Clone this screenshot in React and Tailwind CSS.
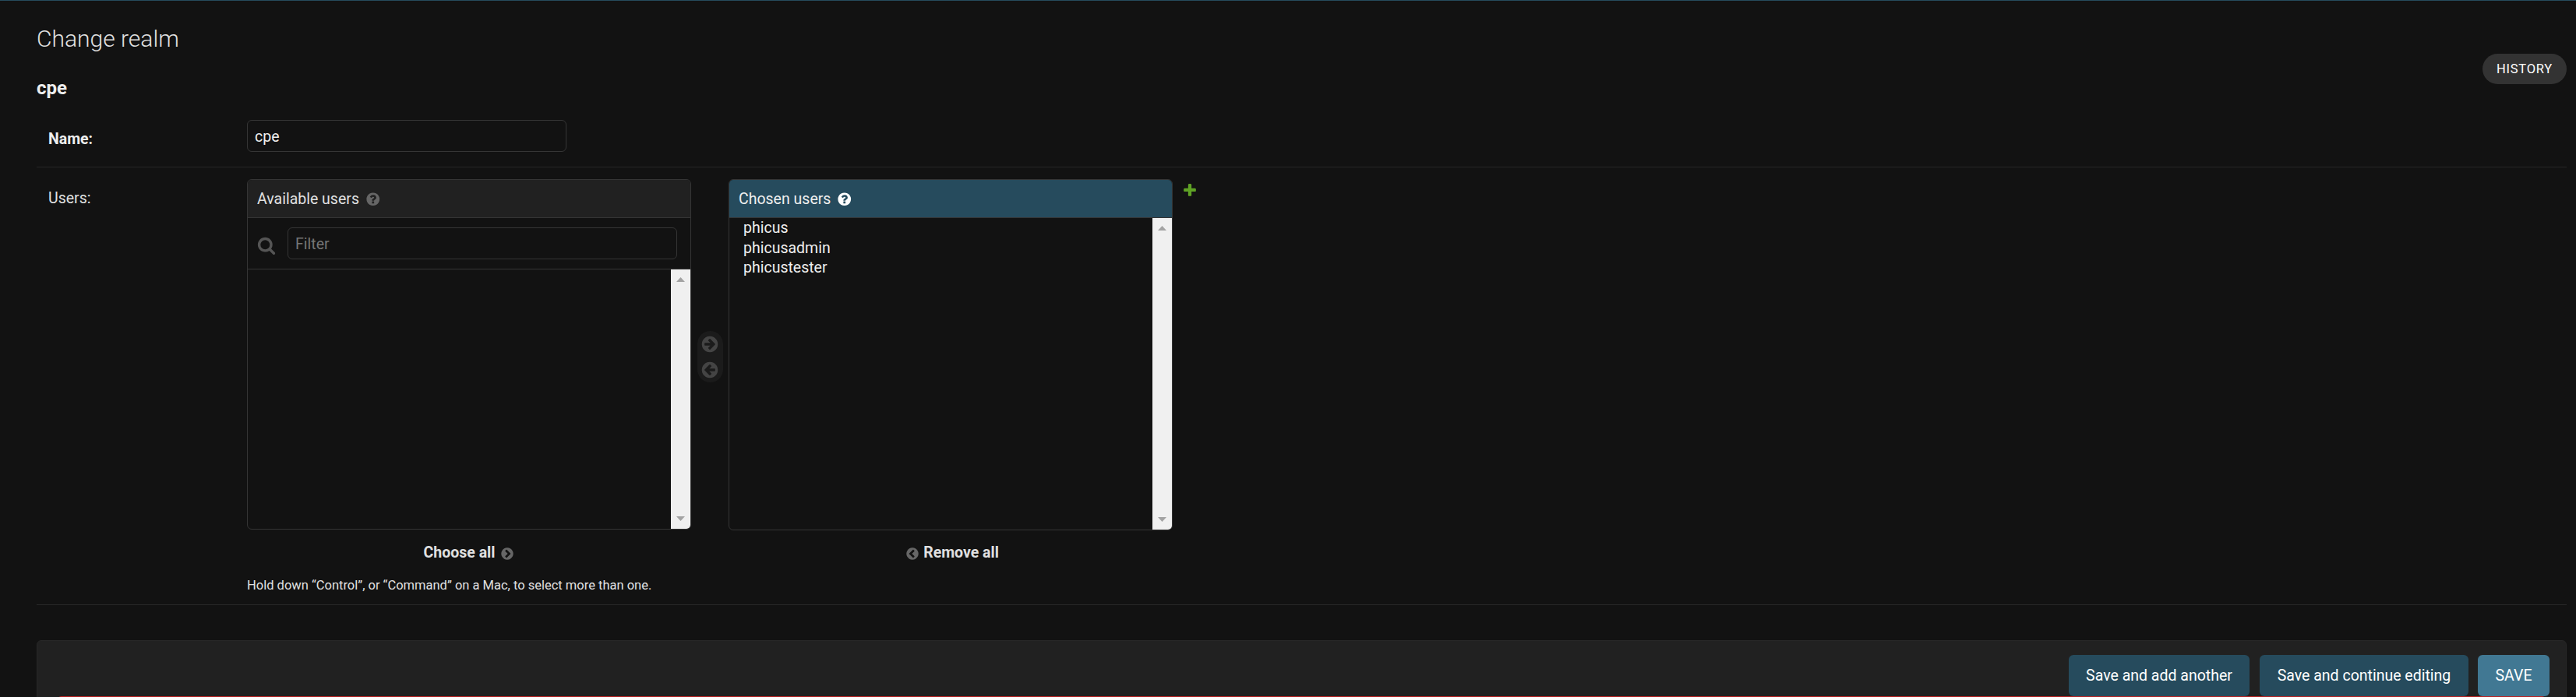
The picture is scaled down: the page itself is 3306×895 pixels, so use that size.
const DISC =
  "q0 209-103 385.5t-279.5 279.5-385.5 103-385.5-103-279.5-279.5-103-385.5 103-385.5 279.5-279.5 385.5-103 385.5 103 279.5 279.5 103 385.5z";

const PATHS = {
  help:
    "M1024 1376v-192q0-14-9-23t-23-9h-192q-14 0-23 9t-9 23v192q0 14 9 23t23 9h192q14 0 23-9t9-23zm256-672q0-88-55.5-163t-138.5-116-170-41q-243 0-371 213-15 24 8 42l132 100q7 6 19 6 16 0 25-12 53-68 86-92 34-24 86-24 48 0 85.5 26t37.5 59q0 38-20 61t-68 45q-63 28-115.5 86.5t-52.5 125.5v36q0 14 9 23t23 9h192q14 0 23-9t9-23q0-19 21.5-49.5t54.5-49.5q32-18 49-28.5t46-35 44.5-48 28-60.5 12.5-81zm384 192" + DISC,
  plus:
    "M1600 796v192q0 40-28 68t-68 28h-416v416q0 40-28 68t-68 28h-192q-40 0-68-28t-28-68v-416h-416q-40 0-68-28t-28-68v-192q0-40 28-68t68-28h416v-416q0-40 28-68t68-28h192q40 0 68 28t28 68v416h416q40 0 68 28t28 68z",
  search:
    "M1216 832q0-185-131.5-316.5t-316.5-131.5-316.5 131.5-131.5 316.5 131.5 316.5 316.5 131.5 316.5-131.5 131.5-316.5zm512 832q0 52-38 90t-90 38q-54 0-90-38l-343-342q-179 124-399 124-143 0-273.5-55.5t-225-150-150-225-55.5-273.5 55.5-273.5 150-225 225-150 273.5-55.5 273.5 55.5 225 150 150 225 55.5 273.5q0 220-124 399l343 343q37 37 37 90z",
  arrow:
    "M1413 896q0-27-18-45l-91-91-362-362q-18-18-45-18t-45 18l-91 91q-18 18-18 45t18 45l189 189h-502q-26 0-45 19t-19 45v128q0 26 19 45t45 19h502l-189 189q-19 19-19 45t19 45l91 91q18 18 45 18t45-18l362-362 91-91q18-18 18-45zm251 0" + DISC,
  chevron:
    "M845 1395l454-454q19-19 19-45t-19-45l-454-454q-19-19-45-19t-45 19l-102 102q-19 19-19 45t19 45l307 307-307 307q-19 19-19 45t19 45l102 102q19 19 45 19t45-19zm819-499" + DISC,
};

function Icon({ name, className }) {
  return (
    <svg viewBox="0 0 1792 1792" fill="currentColor" className={`shrink-0 ${className}`}>
      <path d={PATHS[name]} />
    </svg>
  );
}

function Scrollbar() {
  return (
    <div className="flex w-[25px] shrink-0 flex-col items-center justify-between bg-[#f0f0f0] py-[10px] text-[#a3a3a3]">
      <svg viewBox="0 0 11 6" className="h-[6px] w-[11px]" fill="currentColor">
        <path d="M5.5 0 11 6H0z" />
      </svg>
      <svg viewBox="0 0 11 6" className="h-[6px] w-[11px]" fill="currentColor">
        <path d="M0 0h11L5.5 6z" />
      </svg>
    </div>
  );
}

function Label({ children, className }) {
  return <label className={`w-[270px] shrink-0 pl-[15px] leading-[30px] ${className}`}>{children}</label>;
}

export default function App() {
  return (
    <div className="flex h-[895px] flex-col overflow-hidden border-t border-[#264b5d] bg-[#121212] pr-3 pl-[47px] font-['Roboto',sans-serif] text-[19.5px] text-[#eeeeee]">
      <header className="flex h-[127px] shrink-0 items-start justify-between pt-[31px]">
        <div>
          <h1 className="text-[30px] leading-9 font-light text-[#e0e0e0]">Change realm</h1>
          <h2 className="mt-[30px] text-[24px] leading-[30px] font-bold">cpe</h2>
        </div>
        <a className="mt-[37px] h-[39px] w-[108px] rounded-full bg-[#333333] text-center text-[16.5px] leading-[39px] tracking-[0.75px] text-white">
          HISTORY
        </a>
      </header>

      <div className="flex h-[87px] shrink-0 items-start border-b border-[#272727] pt-[26px]">
        <Label className="mt-[10px] font-bold">Name:</Label>
        <div className="h-[41px] w-[410px] rounded-[6px] border border-[#353535] pl-[9px] leading-[41px]">cpe</div>
      </div>

      <div className="flex h-[562px] shrink-0 items-start border-b border-[#272727] pt-[15px]">
        <Label className="mt-[10px] text-[#e0e0e0]">Users:</Label>
        <div>
          <div className="flex items-start">
            <div className="w-[570px]">
              <div className="flex h-[450px] flex-col overflow-hidden rounded-[6px] border border-[#353535]">
                <div className="flex h-[49px] shrink-0 items-center gap-2 border-b border-[#353535] bg-[#212121] pl-3 text-[#e0e0e0]">
                  <span className="pt-0.5">Available users</span>
                  <Icon name="help" className="mt-0.5 h-[19.5px] w-[19.5px] text-[#666666]" />
                </div>
                <div className="flex h-[66px] shrink-0 items-start border-b border-[#353535] pt-3 pl-3">
                  <Icon name="search" className="mt-[11px] h-6 w-6 text-[#555555]" />
                  <div className="ml-[15px] h-[41px] w-[500px] rounded-[6px] border border-[#353535] pl-[9px] leading-[41px] text-[#757575]">
                    Filter
                  </div>
                </div>
                <div className="flex flex-1 justify-end">
                  <Scrollbar />
                </div>
              </div>
              <div className="mt-[15px] flex h-[30px] items-center justify-center gap-[7px] leading-[30px] font-bold text-[#e0e0e0]">
                Choose all
                <Icon name="chevron" className="mt-px h-[18px] w-[18px] text-[#666666]" />
              </div>
            </div>

            <div className="mr-[7px] ml-2 mt-[195px] flex h-[66px] w-[33px] flex-col items-start justify-between rounded-full bg-[#1b1b1b] pt-[5px] pb-1 pl-1 text-[#444444]">
              <Icon name="arrow" className="h-6 w-6" />
              <Icon name="arrow" className="h-6 w-6 rotate-180" />
            </div>

            <div className="w-[570px]">
              <div className="flex h-[451px] flex-col overflow-hidden rounded-[6px] border border-[#353535]">
                <div className="flex h-[49px] shrink-0 items-center gap-2 border-b border-[#353535] bg-[#264b5d] pl-3">
                  <span className="pt-0.5">Chosen users</span>
                  <Icon name="help" className="mt-0.5 h-[19.5px] w-[19.5px] text-white" />
                </div>
                <div className="flex flex-1 justify-between">
                  <ul className="pl-[18px] leading-[25.5px]">
                    <li>phicus</li>
                    <li>phicusadmin</li>
                    <li>phicustester</li>
                  </ul>
                  <Scrollbar />
                </div>
              </div>
              <div className="mt-[14px] flex h-[30px] items-center justify-center gap-[5px] pl-1 leading-[30px] font-bold text-[#e0e0e0]">
                <Icon name="chevron" className="mt-px h-[18px] w-[18px] rotate-180 text-[#666666]" />
                Remove all
              </div>
            </div>

            <Icon name="plus" className="mt-1 ml-3 h-[20px] w-[20px] text-[#5fa225]" />
          </div>
          <p className="mt-[15px] text-[16.5px] leading-6 text-[#e0e0e0]">
            Hold down “Control”, or “Command” on a Mac, to select more than one.
          </p>
        </div>
      </div>

      <footer className="mt-[45px] h-[100px] shrink-0 rounded-t-[6px] border border-[#272727] bg-[#212121] px-[21px] pt-[18px] text-white">
        <div className="flex justify-end gap-3 leading-[53px]">
          <button className="mr-px h-[53px] w-[232px] rounded-[6px] bg-[#264b5d]">Save and add another</button>
          <button className="h-[53px] w-[268px] rounded-[6px] bg-[#264b5d]">Save and continue editing</button>
          <button className="h-[53px] w-[92px] rounded-[6px] bg-[#417893]">SAVE</button>
        </div>
        <div className="mx-1 h-[50px] rounded-[6px] bg-[#ba2121]" />
      </footer>
    </div>
  );
}
